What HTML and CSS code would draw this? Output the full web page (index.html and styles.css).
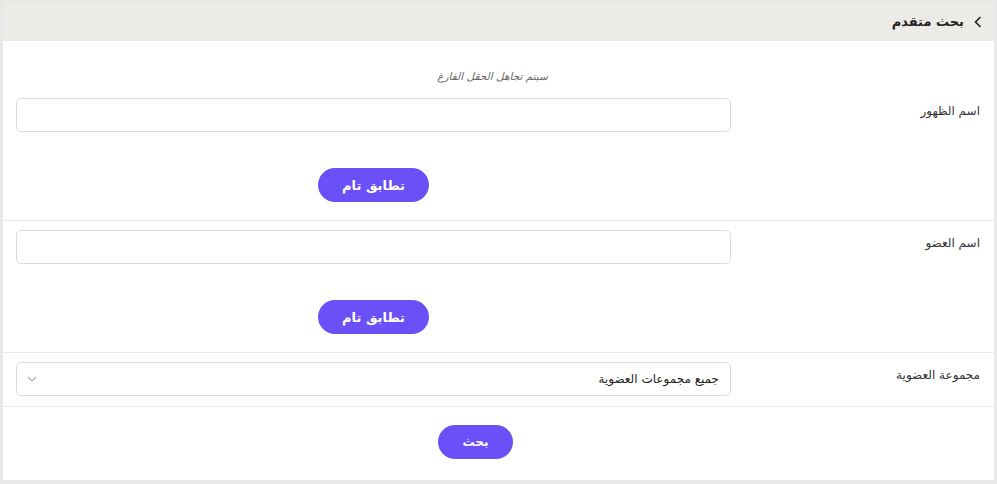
FILE: index.html
```html
<!DOCTYPE html>
<html lang="ar" dir="rtl">
<head>
<meta charset="utf-8">
<title>بحث متقدم</title>
<link rel="stylesheet" href="styles.css">
</head>
<body>
<div class="panel">
  <div class="panel-head">
    <svg class="chev" width="8" height="12" viewBox="0 0 8 12"><path d="M6.5 1 L1.5 6 L6.5 11" fill="none" stroke="#222" stroke-width="1.6"/></svg>
    <span class="title">بحث متقدم</span>
  </div>
  <div class="row row-first">
    <div class="hint">سيتم تجاهل الحقل الفارغ</div>
    <div class="row-inner">
      <div class="label label-1">اسم الظهور</div>
      <div class="field">
        <div class="input"></div>
        <button class="btn btn-wide">تطابق تام</button>
      </div>
    </div>
  </div>
  <div class="row">
    <div class="row-inner">
      <div class="label">اسم العضو</div>
      <div class="field">
        <div class="input"></div>
        <button class="btn btn-wide">تطابق تام</button>
      </div>
    </div>
  </div>
  <div class="row row-select">
    <div class="row-inner">
      <div class="label">مجموعة العضوية</div>
      <div class="field">
        <div class="input select">
          <span class="select-text">جميع مجموعات العضوية</span>
          <svg class="caret" width="10" height="6" viewBox="0 0 10 6"><path d="M1 1 L5 5 L9 1" fill="none" stroke="#aaa" stroke-width="1.1"/></svg>
        </div>
      </div>
    </div>
  </div>
  <div class="footer">
    <button class="btn btn-search">بحث</button>
  </div>
</div>
</body>
</html>
```
FILE: styles.css
```css
* { box-sizing: border-box; }
html, body { margin: 0; padding: 0; }
body {
  background: #e8e8e8;
  font-family: "DejaVu Sans", "Noto Sans", sans-serif;
  color: #333;
  width: 997px;
  height: 484px;
  overflow: hidden;
}
.panel {
  margin: 2px 3px 0 3px;
  background: #fff;
  height: 478px;
}
.panel-head {
  height: 39px;
  background: #edebe8;
  display: flex;
  align-items: center;
  gap: 10px;
  padding-right: 12px;
}
.chev { display: block; }
.title {
  font-weight: bold;
  font-size: 13px;
  color: #222;
}
.row {
  border-bottom: 1px solid #ebebeb;
  padding: 9px 0 18px 0;
}
.row-first { padding-top: 27px; }
.row-select { padding-bottom: 10px; }
.hint {
  font-size: 10.5px;
  font-style: italic;
  color: #666;
  text-align: center;
  line-height: 16px;
  padding-right: 12px;
  margin-bottom: 14px;
}
.row-inner {
  display: flex;
}
.label {
  width: 263px;
  padding-right: 14px;
  font-size: 12px;
  line-height: 18px;
  color: #333;
  padding-top: 4px;
}
.field {
  flex: 1;
  padding-left: 13px;
  display: flex;
  flex-direction: column;
  align-items: center;
}
.input {
  width: 100%;
  height: 34px;
  border: 1px solid #dcdcdc;
  border-radius: 5px;
  background: #fff;
}
.select {
  display: flex;
  align-items: center;
  justify-content: space-between;
  padding: 0 11px 0 10px;
}
.select-text { font-size: 12px; color: #222; }
.caret { display: block; }
.btn {
  border: 0;
  background: #6a50f6;
  color: #fff;
  font-family: inherit;
  font-weight: bold;
  font-size: 13px;
  height: 34px;
  border-radius: 17px;
  padding: 0;
}
.btn-wide { width: 111px; margin-top: 36px; }
.footer {
  display: flex;
  justify-content: center;
  padding: 18px 46px 0 0;
}
.btn-search { width: 75px; font-size: 12px; }
```
